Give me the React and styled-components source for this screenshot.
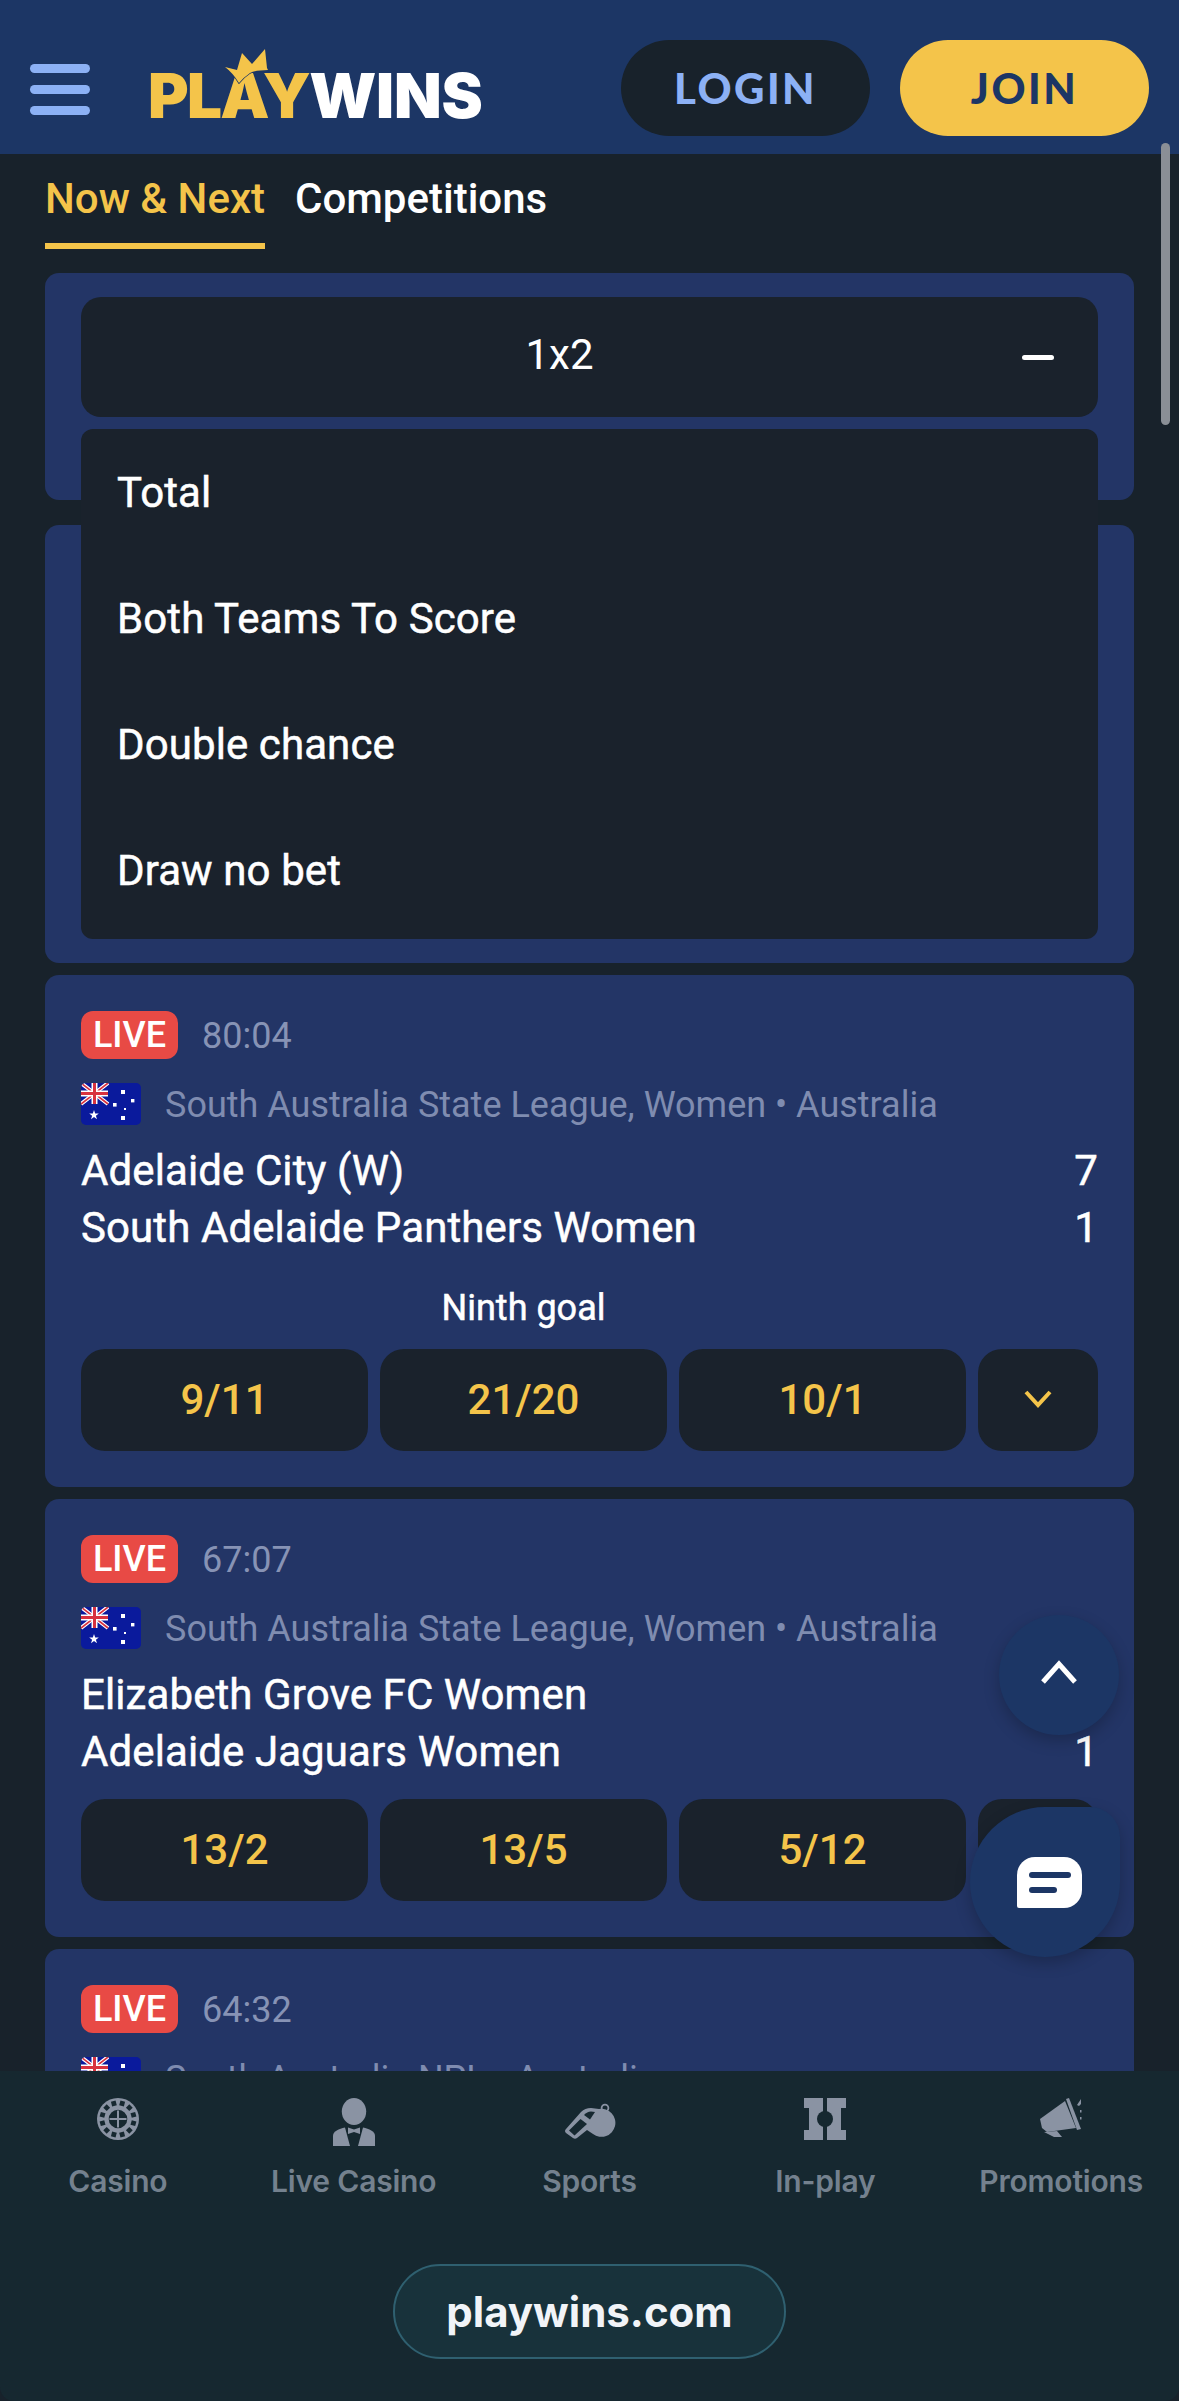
import React from "react";
import styled, { createGlobalStyle } from "styled-components";

const GlobalStyle = createGlobalStyle`
  * { box-sizing: border-box; margin: 0; padding: 0; }
  body { background: #0b0f12; font-family: Roboto, "Liberation Sans", sans-serif; }
`;

const matches = [
  {
    id: 1,
    time: "80:04",
    league: "South Australia State League, Women • Australia",
    home: "Adelaide City (W)",
    away: "South Adelaide Panthers Women",
    homeScore: "7",
    awayScore: "1",
    market: "Ninth goal",
    odds: ["9/11", "21/20", "10/1"],
  },
  {
    id: 2,
    time: "67:07",
    league: "South Australia State League, Women • Australia",
    home: "Elizabeth Grove FC Women",
    away: "Adelaide Jaguars Women",
    homeScore: "",
    awayScore: "1",
    odds: ["13/2", "13/5", "5/12"],
  },
  {
    id: 3,
    time: "64:32",
    league: "South Australia NPL • Australia",
  },
];

const markets = ["Total", "Both Teams To Score", "Double chance", "Draw no bet"];

function RouletteIcon() {
  const pockets = Array.from({ length: 12 }, (_, i) => i * 30 + 15);
  return (
    <svg width="42" height="42" viewBox="0 0 42 42">
      <circle cx="21" cy="21" r="21" fill="#8a93a3" />
      {pockets.map((deg) => (
        <rect key={deg} x="18.6" y="2.6" width="4.8" height="4.8" fill="#162830" transform={`rotate(${deg} 21 21)`} />
      ))}
      <circle cx="21" cy="21" r="10.5" fill="#162830" stroke="#8a93a3" strokeWidth="2.4" />
      <path d="M21 12.5v17M12.5 21h17" stroke="#8a93a3" strokeWidth="2" />
    </svg>
  );
}

function DealerIcon() {
  return (
    <svg width="42" height="48" viewBox="0 0 42 48">
      <ellipse cx="21" cy="13.5" rx="12.2" ry="13.5" fill="#8a93a3" />
      <path d="M0 48V38C0 33 6 31 12 29.5L17 48Z" fill="#8a93a3" />
      <path d="M42 48V38C42 33 36 31 30 29.5L25 48Z" fill="#8a93a3" />
      <path d="M15 29.5L21 31.5L27 29.5V36L21 34L15 36Z" fill="#8a93a3" />
    </svg>
  );
}

function WhistleIcon() {
  return (
    <svg width="54" height="48" viewBox="13 13 54 48">
      <circle cx="56" cy="23" r="3.4" fill="none" stroke="#8a93a3" strokeWidth="1.8" />
      <path
        d="M17 44L32 27Q36 23 42 23L50 24A14 14 0 1 1 44 49L38 45L28 53Q26 54.5 24 53L17 48Q15 46 17 44Z"
        fill="#8a93a3"
      />
      <path d="M20 45.5L31.5 34L38 39L25.5 50.5Z" fill="#162830" />
      <path d="M35 30Q38 26.5 42 26.5L46 27L41 34.5Z" fill="#162830" />
    </svg>
  );
}

function InPlayIcon() {
  return (
    <svg width="42" height="42" viewBox="0 0 42 42">
      <path d="M0 0H19V42H0V32H5V10H0Z" fill="#8a93a3" />
      <path d="M42 0H23V42H42V32H37V10H42Z" fill="#8a93a3" />
      <circle cx="21" cy="21" r="8" fill="#162830" />
    </svg>
  );
}

function MegaphoneIcon() {
  return (
    <svg width="42" height="42" viewBox="0 0 42 42">
      <path d="M0 21L25 3L36 30L7 34L2 30Z" fill="#8a93a3" />
      <path d="M4 34L14 39H22L17 33Z" fill="#8a93a3" />
      <path d="M26 1L29 0L41 31L37 32Z" fill="#8a93a3" />
      <path d="M37 7L41 1V6L39 8Z" fill="#8a93a3" />
      <rect x="40" y="12" width="1.5" height="2.5" fill="#8a93a3" />
      <rect x="40" y="19" width="1.5" height="2.5" fill="#8a93a3" />
    </svg>
  );
}

const navItems = [
  { label: "Casino", Icon: RouletteIcon },
  { label: "Live Casino", Icon: DealerIcon },
  { label: "Sports", Icon: WhistleIcon },
  { label: "In-play", Icon: InPlayIcon },
  { label: "Promotions", Icon: MegaphoneIcon },
];

function AustraliaFlag() {
  return (
    <FlagBox viewBox="0 0 60 42">
      <rect width="60" height="42" fill="#0a1a9c" />
      <path d="M0 0L27 21M27 0L0 21" stroke="#fff" strokeWidth="4" />
      <path d="M0 0L27 21M27 0L0 21" stroke="#d8323f" strokeWidth="1.6" />
      <path d="M13.5 0V21M0 10.5H27" stroke="#fff" strokeWidth="6" />
      <path d="M13.5 0V21M0 10.5H27" stroke="#d8323f" strokeWidth="3" />
      <path d="M13 27l1.2 3.4 3.6.1-2.9 2.2 1.1 3.5-3-2.1-3 2.1 1.1-3.5-2.9-2.2 3.6-.1z" fill="#fff" />
      <rect x="40" y="7" width="4" height="4" fill="#fff" />
      <rect x="50" y="16" width="3.4" height="3.4" fill="#fff" />
      <rect x="32" y="20" width="3.6" height="3.6" fill="#fff" />
      <rect x="43" y="25" width="2" height="2" fill="#fff" />
      <rect x="40" y="33" width="4" height="4" fill="#fff" />
    </FlagBox>
  );
}

function MatchCard({ match }) {
  return (
    <Card>
      <StatusRow>
        <LiveBadge>LIVE</LiveBadge>
        <MatchTime>{match.time}</MatchTime>
      </StatusRow>
      <LeagueRow>
        <AustraliaFlag />
        <LeagueName>{match.league}</LeagueName>
      </LeagueRow>
      {match.home && (
        <Teams>
          <TeamRow>
            <span>{match.home}</span>
            <span>{match.homeScore}</span>
          </TeamRow>
          <TeamRow>
            <span>{match.away}</span>
            <span>{match.awayScore}</span>
          </TeamRow>
        </Teams>
      )}
      {match.market && <MarketTitle>{match.market}</MarketTitle>}
      {match.odds && (
        <OddsGrid>
          {match.odds.map((odd) => (
            <OddButton key={odd}>{odd}</OddButton>
          ))}
          <OddButton>
            <svg width="30" height="20" viewBox="0 0 30 20">
              <path d="M3 3L15 16L27 3" fill="none" stroke="#f4c44a" strokeWidth="4" />
            </svg>
          </OddButton>
        </OddsGrid>
      )}
    </Card>
  );
}

export default function App() {
  return (
    <Page>
      <GlobalStyle />
      <Header>
        <Burger>
          <BurgerLine />
          <BurgerLine />
          <BurgerLine />
        </Burger>
        <Logo>
          <LogoGold>PLAY</LogoGold>
          <LogoWhite>WINS</LogoWhite>
          <LogoCrown viewBox="225 49 44 35">
            <path
              d="M225 67L237 70L242 53L252 64L265 49L267 68L268 70Q256 70 250 73Q244 77 239 83Q233 73 225 67Z"
              fill="#f4c44a"
              stroke="#1c3665"
              strokeWidth="1.5"
              paintOrder="stroke"
            />
          </LogoCrown>
        </Logo>
        <HeaderActions>
          <PillButton>LOGIN</PillButton>
          <PillButton $primary>JOIN</PillButton>
        </HeaderActions>
      </Header>

      <Main>
        <Tabs>
          <Tab $active>Now &amp; Next</Tab>
          <Tab>Competitions</Tab>
        </Tabs>
        <CardStack>
          <MarketCard>
            <SelectHead>
              1x2
              <MinusMark />
            </SelectHead>
            <Dropdown>
              {markets.map((item) => (
                <DropdownItem key={item}>{item}</DropdownItem>
              ))}
            </Dropdown>
          </MarketCard>
          <CoveredCard />
          {matches.map((match) => (
            <MatchCard key={match.id} match={match} />
          ))}
        </CardStack>
      </Main>

      <BottomBar>
        <NavRow>
          {navItems.map(({ label, Icon }) => (
            <NavItem key={label}>
              <NavIcon>
                <Icon />
              </NavIcon>
              <NavLabel>{label}</NavLabel>
            </NavItem>
          ))}
        </NavRow>
        <DomainPill>playwins.com</DomainPill>
      </BottomBar>

      <ScrollThumb />
      <ScrollTopButton>
        <svg width="38" height="26" viewBox="0 0 38 26">
          <path d="M3 23L19 5L35 23" fill="none" stroke="#fff" strokeWidth="5" />
        </svg>
      </ScrollTopButton>
      <ChatButton>
        <svg width="65" height="51" viewBox="0 0 65 51">
          <path d="M18 0H47A18 18 0 0 1 65 18V33A18 18 0 0 1 47 51H2Q0 51 0 49V18A18 18 0 0 1 18 0Z" fill="#fff" />
          <rect x="12" y="15" width="42" height="6" rx="3" fill="#1c3665" />
          <rect x="12" y="30" width="28" height="6" rx="3" fill="#1c3665" />
        </svg>
      </ChatButton>
    </Page>
  );
}

const Page = styled.div`
  position: relative;
  display: flex;
  flex-direction: column;
  width: 1179px;
  height: 2401px;
  overflow: hidden;
  background: #18222b;
`;

const Header = styled.header`
  flex: 0 0 154px;
  display: flex;
  align-items: center;
  padding: 22px 30px 0;
  background: #1c3665;
`;

const Burger = styled.div`
  display: flex;
  flex-direction: column;
  gap: 12px;
  width: 60px;
  margin-top: 3px;
`;

const BurgerLine = styled.span`
  height: 9px;
  border-radius: 5px;
  background: #8cb1f5;
`;

const Logo = styled.div`
  position: relative;
  display: flex;
  margin-left: 58px;
  margin-top: 15px;
  font-family: Inter, "Liberation Sans", sans-serif;
  font-size: 62px;
  font-weight: 900;
  line-height: 62px;
`;

const LogoGold = styled.span`
  color: #f4c44a;
  letter-spacing: -1.7px;
`;

const LogoWhite = styled.span`
  color: #fff;
  letter-spacing: -0.2px;
`;

const LogoCrown = styled.svg`
  position: absolute;
  left: 77px;
  top: -16px;
  width: 44px;
  height: 35px;
`;

const HeaderActions = styled.div`
  display: flex;
  gap: 30px;
  margin-left: auto;
`;

const PillButton = styled.button`
  width: 249px;
  height: 96px;
  border: none;
  border-radius: 48px;
  font-family: Lato, "Liberation Sans", sans-serif;
  font-size: 42px;
  font-weight: 900;
  letter-spacing: 2.5px;
  background: ${(p) => (p.$primary ? "#f4c44a" : "#18222b")};
  color: ${(p) => (p.$primary ? "#1c3665" : "#8cb1f5")};
`;

const Main = styled.main`
  flex: 1;
  min-height: 0;
  overflow: hidden;
  padding: 0 45px;
`;

const Tabs = styled.nav`
  display: flex;
  gap: 30px;
  margin-bottom: 24px;
`;

const Tab = styled.div`
  height: 95px;
  padding-top: 20px;
  font-size: 42px;
  font-weight: 500;
  line-height: 50px;
  color: ${(p) => (p.$active ? "#f4c44a" : "#fff")};
  border-bottom: 6px solid ${(p) => (p.$active ? "#f4c44a" : "transparent")};
`;

const CardStack = styled.div`
  display: flex;
  flex-direction: column;
  gap: 12px;
`;

const Card = styled.section`
  flex: none;
  padding: 36px;
  border-radius: 14px;
  background: #233566;
`;

const MarketCard = styled(Card)`
  position: relative;
  height: 227px;
  margin-bottom: 13px;
  padding: 24px 36px;
`;

const CoveredCard = styled(Card)`
  height: 438px;
`;

const SelectHead = styled.div`
  position: relative;
  display: flex;
  align-items: center;
  justify-content: center;
  height: 120px;
  padding: 0 60px 5px 0;
  border-radius: 20px;
  background: #1a222c;
  color: #fff;
  font-size: 42px;
`;

const MinusMark = styled.span`
  position: absolute;
  right: 44px;
  top: 58px;
  width: 32px;
  height: 5px;
  border-radius: 3px;
  background: #fff;
`;

const Dropdown = styled.div`
  position: absolute;
  left: 36px;
  right: 36px;
  top: 156px;
  z-index: 2;
  padding-bottom: 6px;
  border-radius: 12px;
  background: #1a222c;
`;

const DropdownItem = styled.div`
  display: flex;
  align-items: center;
  height: 126px;
  padding: 0 36px;
  color: #fff;
  font-size: 42px;
  letter-spacing: 0.1px;
  -webkit-text-stroke: 0.5px #fff;
`;

const StatusRow = styled.div`
  display: flex;
  align-items: center;
  gap: 24px;
`;

const LiveBadge = styled.span`
  display: flex;
  align-items: center;
  justify-content: center;
  width: 97px;
  height: 48px;
  border-radius: 12px;
  background: #e84a45;
  color: #fff;
  font-size: 36px;
  font-weight: 500;
`;

const MatchTime = styled.span`
  padding-top: 2px;
  color: #8793b5;
  font-size: 36px;
`;

const LeagueRow = styled.div`
  display: flex;
  align-items: center;
  gap: 24px;
  margin-top: 24px;
  height: 42px;
`;

const FlagBox = styled.svg`
  flex: none;
  width: 60px;
  height: 42px;
  border-radius: 5px;
`;

const LeagueName = styled.span`
  padding-top: 2px;
  color: #7f8cb0;
  font-size: 36px;
  white-space: nowrap;
`;

const Teams = styled.div`
  margin-top: 17px;
`;

const TeamRow = styled.div`
  display: flex;
  justify-content: space-between;
  height: 57px;
  color: #fff;
  font-size: 42px;
  letter-spacing: 0.1px;
  line-height: 57px;
  -webkit-text-stroke: 0.5px #fff;
`;

const MarketTitle = styled.div`
  width: 885px;
  height: 44px;
  margin-top: 30px;
  color: #fff;
  font-size: 36px;
  line-height: 44px;
  text-align: center;
  -webkit-text-stroke: 0.5px #fff;
`;

const OddsGrid = styled.div`
  display: grid;
  grid-template-columns: repeat(3, 1fr) 120px;
  gap: 12px;
  margin-top: 19px;
`;

const OddButton = styled.button`
  display: flex;
  align-items: center;
  justify-content: center;
  height: 102px;
  padding-bottom: 2px;
  border: none;
  border-radius: 24px;
  background: #1a222c;
  color: #f4c44a;
  font-family: inherit;
  font-size: 42px;
  font-weight: 500;
`;

const BottomBar = styled.footer`
  position: relative;
  z-index: 3;
  flex: 0 0 330px;
  display: flex;
  flex-direction: column;
  align-items: center;
  border-radius: 0 0 14px 14px;
  background: #162830;
`;

const NavRow = styled.div`
  display: grid;
  grid-template-columns: repeat(5, 1fr);
  width: 100%;
  padding-top: 27px;
`;

const NavItem = styled.div`
  display: flex;
  flex-direction: column;
  align-items: center;
`;

const NavIcon = styled.div`
  display: flex;
  justify-content: center;
  height: 48px;
`;

const NavLabel = styled.span`
  margin-top: 16px;
  color: #74818e;
  font-family: Inter, "Liberation Sans", sans-serif;
  font-size: 30px;
  font-weight: 600;
  letter-spacing: -0.2px;
  line-height: 38px;
  white-space: nowrap;
`;

const DomainPill = styled.div`
  display: flex;
  align-items: center;
  justify-content: center;
  width: 393px;
  height: 95px;
  margin-top: 64px;
  border: 2px solid #2f6070;
  border-radius: 48px;
  background: #18323b;
  color: #f1f4f8;
  font-family: Inter, "Liberation Sans", sans-serif;
  font-size: 42px;
  font-weight: 700;
`;

const ScrollThumb = styled.div`
  position: absolute;
  left: 1161px;
  top: 143px;
  z-index: 4;
  width: 9px;
  height: 282px;
  border-radius: 5px;
  background: #8a8f96;
`;

const ScrollTopButton = styled.button`
  position: absolute;
  left: 999px;
  top: 1615px;
  z-index: 4;
  display: flex;
  align-items: center;
  justify-content: center;
  width: 120px;
  height: 120px;
  padding-bottom: 6px;
  border: none;
  border-radius: 50%;
  background: #1c3665;
  box-shadow: 0 6px 16px rgba(0, 0, 0, 0.22);
`;

const ChatButton = styled.button`
  position: absolute;
  left: 970px;
  top: 1807px;
  z-index: 4;
  display: flex;
  align-items: center;
  justify-content: center;
  width: 150px;
  height: 150px;
  padding-left: 9px;
  border: none;
  border-radius: 50% 30px 50% 50%;
  background: #1c3665;
  box-shadow: 0 6px 16px rgba(0, 0, 0, 0.22);
`;
